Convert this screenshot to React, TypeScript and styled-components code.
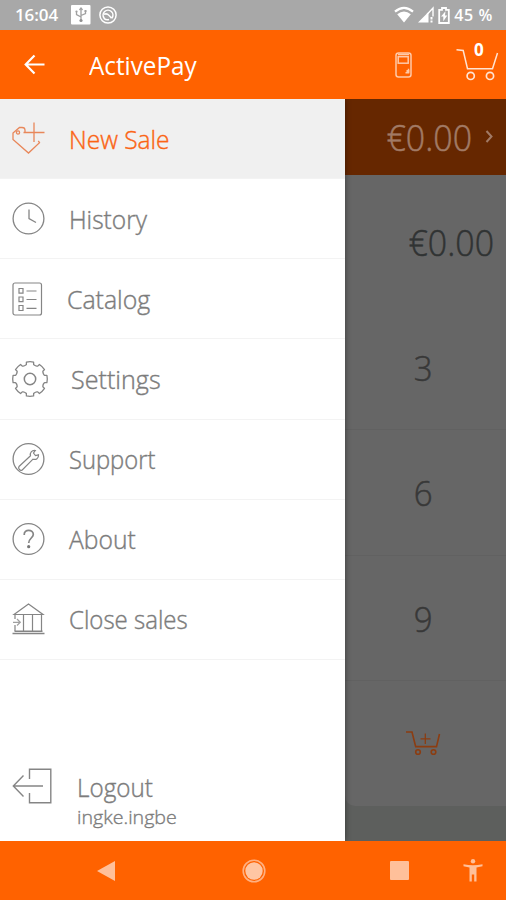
import React from 'react';
import styled, { createGlobalStyle } from 'styled-components';

const Global = createGlobalStyle`
  * { box-sizing: border-box; }
  body { margin: 0; background: #ff6200; font-family: 'Open Sans', 'Noto Sans', sans-serif; }
  svg { display: block; flex: none; fill: none; overflow: visible; }
`;

const Screen = styled.div`
  width: 506px;
  height: 900px;
  display: flex;
  flex-direction: column;
  overflow: hidden;
`;

const StatusBar = styled.header`
  flex: none;
  height: 30px;
  display: flex;
  align-items: center;
  justify-content: space-between;
  padding: 0 13px 0 15px;
  background: #a8a8a8;
  color: #fff;
`;

const StatusText = styled.span<{ $size: number; $spacing: number }>`
  font: 600 ${p => p.$size}px/28px 'Open Sans', sans-serif;
  letter-spacing: ${p => p.$spacing}px;
  white-space: nowrap;
`;

const StatusGroup = styled.div<{ $gap: number }>`
  display: flex;
  align-items: center;
  gap: ${p => p.$gap}px;
`;

const Toolbar = styled.div`
  flex: none;
  height: 69px;
  display: flex;
  align-items: center;
  padding: 0 8px 0 24px;
  background: #ff6200;
  color: #fff;
`;

const Title = styled.h1`
  margin: 0 0 0 44px;
  font-size: 25px;
  line-height: 36px;
  font-weight: 400;
  white-space: nowrap;
  transform: scaleX(0.97);
  transform-origin: left;
`;

const TerminalSlot = styled.div`
  margin: 0 44px 0 auto;
`;

const CartSlot = styled.div`
  position: relative;
`;

const CartCount = styled.span`
  position: absolute;
  left: 18px;
  top: -10px;
  font: 700 17px/24px 'Open Sans', sans-serif;
`;

const Main = styled.main`
  flex: none;
  height: 742px;
  display: flex;
  background: #5d5f5d;
`;

const Drawer = styled.nav`
  position: relative;
  z-index: 1;
  width: 345px;
  height: 742px;
  display: flex;
  flex-direction: column;
  background: #fff;
  box-shadow: 0 0 6px rgba(0, 0, 0, 0.45);
  clip-path: inset(0 -12px 0 0);
`;

const MenuRow = styled.a<{ $active?: boolean; $gap: number }>`
  flex: none;
  height: 80.15px;
  display: flex;
  align-items: center;
  gap: ${p => p.$gap}px;
  padding-left: 12px;
  color: ${p => (p.$active ? '#fb6414' : '#7c7c7c')};
  background: ${p => (p.$active ? '#f0f0f0' : '#fff')};
  border-bottom: 1px solid #f3f3f3;
`;

const Label = styled.span<{ $scale: number }>`
  font-size: 25px;
  line-height: 34px;
  font-weight: 300;
  -webkit-text-stroke: 0.4px currentColor;
  white-space: nowrap;
  transform: scaleX(${p => p.$scale});
  transform-origin: left;
`;

const LogoutRow = styled.a`
  display: flex;
  gap: 25px;
  margin-top: auto;
  padding: 0 0 12px 12px;
  color: #7c7c7c;
`;

const LogoutText = styled.div`
  display: flex;
  flex-direction: column;
  margin-top: 2px;
`;

const UserName = styled.span`
  font-size: 18.5px;
  line-height: 25px;
  font-weight: 300;
  -webkit-text-stroke: 0.35px currentColor;
  transform: scaleX(1.06);
  transform-origin: left;
`;

const Sale = styled.section`
  width: 161px;
  height: 707px;
  display: flex;
  flex-direction: column;
  background: #666;
  border-radius: 0 0 0 10px;
`;

const Amount = styled.span`
  font-size: 36.5px;
  line-height: 50px;
  font-weight: 300;
  -webkit-text-stroke: 0.5px currentColor;
  transform: scaleX(0.93);
  transform-origin: right;
`;

const TotalBar = styled.div`
  flex: none;
  height: 76px;
  display: flex;
  align-items: center;
  justify-content: flex-end;
  gap: 14px;
  padding: 0 13px 0 0;
  background: #662700;
  color: #a17a65;
`;

const Entry = styled.div`
  flex: none;
  height: 130px;
  display: flex;
  align-items: center;
  justify-content: flex-end;
  padding: 3px 12px 0 0;
  color: #303333;
`;

const Key = styled.button`
  flex: none;
  height: 125.3px;
  display: flex;
  align-items: center;
  justify-content: center;
  padding: 0 5px 0 0;
  border: 0;
  border-bottom: 1px solid #616161;
  background: none;
  color: #383838;
  font: 300 35.5px/46px 'Open Sans', sans-serif;
  -webkit-text-stroke: 0.5px currentColor;

  &:last-child { border-bottom: 0; }
`;

const Digit = styled.span`
  transform: scaleX(0.93);
`;

const NavBar = styled.footer`
  flex: 1;
  display: flex;
  align-items: center;
  padding-left: 69px;
  background: #ff6200;
`;

const NavButton = styled.div<{ $before?: number }>`
  flex: none;
  width: 74px;
  display: flex;
  justify-content: center;
  margin-left: ${p => p.$before ?? 0}px;
`;

const UsbIcon = () => (
  <svg width="20" height="20" viewBox="0 0 20 20">
    <rect width="19.5" height="19.5" rx="1" fill="#fff" />
    <g stroke="#a0a0a0" strokeWidth="1.3">
      <path d="M10 3.5V15M10 12 5.5 9.5V6.5M10 10.5l4.5-2V6" />
      <path d="M8.5 5 10 3l1.5 2" />
    </g>
    <circle cx="10" cy="15.5" r="1.6" fill="#909090" />
    <circle cx="5.5" cy="6.5" r="1.1" fill="#a0a0a0" />
    <rect x="13.5" y="5" width="2" height="2" fill="#a0a0a0" />
  </svg>
);

const SyncIcon = () => (
  <svg width="18" height="18" viewBox="0 0 18 18" stroke="#fff">
    <circle cx="9" cy="9" r="8.1" strokeWidth="1.5" />
    <path d="M5.2 12.2A4.9 4.9 0 1 1 12.8 12.2M5 12.3a5.2 5.2 0 0 0 5 1.2M5 8.3c3-1.3 4.5.2 7.6 4" strokeWidth="1.6" />
  </svg>
);

const WifiIcon = () => (
  <svg width="20" height="16" viewBox="0 0 20 16">
    <path d="M1 4.7Q10-3 19 4.7" stroke="#fff" strokeWidth="2.2" />
    <path d="M3.2 7.2Q10 1.8 16.8 7.2L10 15.5z" fill="#fff" />
  </svg>
);

const SignalIcon = () => (
  <svg width="16" height="16" viewBox="0 0 16 16">
    <path d="M0 15.5 10.5 5v10.5z" fill="#fff" />
    <path d="M9 7.5 15 1v8.5" stroke="#fff" strokeWidth="1.4" />
    <path d="M13.5 10v2.5M13.5 13.5v2" stroke="#fff" strokeWidth="2" />
  </svg>
);

const BatteryIcon = () => (
  <svg width="12" height="17" viewBox="0 0 12 17">
    <path d="M4 1h4v1.8h2.8V16H1.2V2.8H4z" stroke="#fff" strokeWidth="1.8" />
    <path d="M7.5 4.2 3 9.6h2.3v4.6L9.3 8.5H7z" fill="#fff" />
  </svg>
);

const BackArrow = () => (
  <svg width="21" height="20" viewBox="0 0 21 20" stroke="#fff" strokeWidth="2.2">
    <path d="M20.5 9.5H2M10.5.5 1.7 9.5l8.8 9" />
  </svg>
);

const TerminalIcon = () => (
  <svg width="17" height="26" viewBox="0 0 17 26" stroke="#ffc9a8" strokeWidth="1.5">
    <rect x="1" y="1" width="15" height="24" rx="2.5" />
    <rect x="3.2" y="4.7" width="10" height="6.5" />
    <path d="M3 2.5h11M10.5 20.8h3v-4" />
    <path d="M11.5 19h1.8v1.8" strokeWidth="2" />
  </svg>
);

const CartIcon = () => (
  <svg width="42" height="33" viewBox="0 0 42 33" stroke="#ffe3d2" strokeWidth="1.5">
    <path d="M.5 1.7 7.2 2.5l4.3 18.2h25L41.5 5" />
    <circle cx="14.7" cy="27.9" r="3.6" strokeWidth="1.7" />
    <circle cx="34" cy="27.9" r="3.6" strokeWidth="1.7" />
  </svg>
);

const AddCartIcon = () => (
  <svg width="34" height="24" viewBox="0 0 34 24" stroke="#8c3d11" strokeWidth="1.6">
    <path d="M0 0h6l3.7 14.6h20.8L33.5 2" />
    <circle cx="12" cy="20" r="2.3" />
    <circle cx="27.5" cy="20" r="2.3" />
    <path d="M19.3 1.5v10.5M14.5 6.8h10" strokeWidth="1.3" />
  </svg>
);

const ChevronIcon = () => (
  <svg width="7" height="12" viewBox="0 0 7 12" stroke="#a17a65" strokeWidth="2">
    <path d="M.5 0 5.5 5.5l-5 5.5" />
  </svg>
);

const NewSaleIcon = () => (
  <svg width="33" height="33" viewBox="0 0 33 33" stroke="#e8875a" strokeWidth="1.3">
    <path d="M22 0.5V20M11.5 10.5H32.5" />
    <path d="M13 10.5V8.3Q13 5.5 10 5.5H7.5L1 11v6.5L16.5 31 27.5 20.6l-1.2-1.8" />
    <circle cx="6" cy="10.5" r="1.6" />
  </svg>
);

const ClockIcon = () => (
  <svg width="33" height="33" viewBox="0 0 33 33" stroke="#858585" strokeWidth="1.3">
    <circle cx="16.5" cy="16.5" r="15.4" />
    <path d="M17 7.5v9l7 4" />
  </svg>
);

const CatalogIcon = () => (
  <svg width="31" height="34" viewBox="0 0 31 34" stroke="#858585" strokeWidth="1.2">
    <rect x="1" y="1" width="28.5" height="32" rx="2" />
    <path d="M7 6.5h4v4.7H7zM7 15h4v4.7H7zM7 23.5h4v5H7zM14.5 9h10M14.5 17.5h10M14.5 26.3h10" />
  </svg>
);

const teeth = Array.from({ length: 8 }, (_, i) => {
  const at = (deg: number, r: number) => {
    const a = ((i * 45 + deg - 90) * Math.PI) / 180;
    return `${(18 + r * Math.cos(a)).toFixed(2)} ${(18 + r * Math.sin(a)).toFixed(2)}`;
  };
  return `${i ? 'L' : 'M'}${at(-17, 14.6)}L${at(-14, 15)}L${at(-12, 17.3)}A17.3 17.3 0 0 1 ${at(12, 17.3)}L${at(14, 15)}L${at(17, 14.6)}A5 5 0 0 0 ${at(28, 14.6)}`;
}).join('');

const GearIcon = () => (
  <svg width="36" height="36" viewBox="0 0 36 36" stroke="#858585" strokeWidth="1.3" strokeLinejoin="round">
    <path d={`${teeth}Z`} />
    <circle cx="18" cy="18" r="5.7" strokeWidth="1.5" />
  </svg>
);

const SupportIcon = () => (
  <svg width="33" height="33" viewBox="0 0 33 33" stroke="#858585" strokeWidth="1.2">
    <circle cx="16.5" cy="16" r="15.4" strokeWidth="1.3" />
    <path d="m7 23.5 11.5-10.7c-.8-3 1.2-5.7 4.8-5.3L21.5 10l2 2.5 3-.7c.3 3.7-2.5 5.3-5.5 4.4L10 27.2c-2 1-4.2-1.7-3-3.7z" />
  </svg>
);

const AboutIcon = () => (
  <svg width="33" height="33" viewBox="0 0 33 33" stroke="#858585" strokeWidth="1.3">
    <circle cx="16.5" cy="16" r="15.4" />
    <path d="M12.2 12C11.8 5.5 21.5 6.2 21.3 11.5c-.1 3.3-4.6 4-4.6 8.5" strokeWidth="1.7" />
    <circle cx="16.7" cy="23.7" r="1.6" fill="#777" stroke="none" />
  </svg>
);

const BankIcon = () => (
  <svg width="33" height="32" viewBox="0 0 33 32" stroke="#858585" strokeWidth="1.2">
    <path d="M2 11.5 16.5 1 31 11.5zM3 12v4M3 22v6M11.5 12v16M20.5 12v16M29.5 12v16" />
    <path d="M2.5 28.2h28M.5 30.5h32" strokeWidth="1.6" />
    <path d="M1 19.3h7M5 16l3.3 3.3L5 22.5" stroke="#a0a0a0" />
  </svg>
);

const LogoutIcon = () => (
  <svg width="40" height="36" viewBox="0 0 40 36" stroke="#858585" strokeWidth="1.4">
    <path d="M17.5 11V1.2h21.3v33.6H17.5V25M31 18H1.5M11.5 7.5 1.3 18l10.2 10.5" />
  </svg>
);

const items = [
  { label: 'New Sale', icon: <NewSaleIcon />, gap: 24, scale: 0.98, active: true },
  { label: 'History', icon: <ClockIcon />, gap: 24, scale: 0.98 },
  { label: 'Catalog', icon: <CatalogIcon />, gap: 24, scale: 0.995 },
  { label: 'Settings', icon: <GearIcon />, gap: 23, scale: 1.005 },
  { label: 'Support', icon: <SupportIcon />, gap: 24, scale: 0.95 },
  { label: 'About', icon: <AboutIcon />, gap: 24, scale: 0.985 },
  { label: 'Close sales', icon: <BankIcon />, gap: 24, scale: 0.96 },
];

export default function App() {
  return (
    <Screen>
      <Global />
      <StatusBar>
        <StatusGroup $gap={13}>
          <StatusText $size={17} $spacing={-0.1}>16:04</StatusText>
          <StatusGroup $gap={8}><UsbIcon /><SyncIcon /></StatusGroup>
        </StatusGroup>
        <StatusGroup $gap={4}>
          <WifiIcon /><SignalIcon /><BatteryIcon />
          <StatusText $size={16} $spacing={0.6}>45 %</StatusText>
        </StatusGroup>
      </StatusBar>
      <Toolbar>
        <BackArrow />
        <Title>ActivePay</Title>
        <TerminalSlot><TerminalIcon /></TerminalSlot>
        <CartSlot><CartIcon /><CartCount>0</CartCount></CartSlot>
      </Toolbar>
      <Main>
        <Drawer>
          {items.map(({ label, icon, gap, scale, active }) => (
            <MenuRow key={label} $active={active} $gap={gap}>
              {icon}
              <Label $scale={scale}>{label}</Label>
            </MenuRow>
          ))}
          <LogoutRow>
            <LogoutIcon />
            <LogoutText>
              <Label $scale={0.97}>Logout</Label>
              <UserName>ingke.ingbe</UserName>
            </LogoutText>
          </LogoutRow>
        </Drawer>
        <Sale>
          <TotalBar><Amount>€0.00</Amount><ChevronIcon /></TotalBar>
          <Entry><Amount>€0.00</Amount></Entry>
          <Key><Digit>3</Digit></Key>
          <Key><Digit>6</Digit></Key>
          <Key><Digit>9</Digit></Key>
          <Key><AddCartIcon /></Key>
        </Sale>
      </Main>
      <NavBar>
        <NavButton>
          <svg width="18" height="20" viewBox="0 0 18 20"><path d="M18 0v20L0 10z" fill="#ffc09a" /></svg>
        </NavButton>
        <NavButton $before={74}>
          <svg width="24" height="24" viewBox="0 0 24 24">
            <circle cx="12" cy="12" r="10.8" stroke="#ffb080" strokeWidth="1.6" />
            <circle cx="12" cy="12" r="8.7" fill="#ffc6a3" />
          </svg>
        </NavButton>
        <NavButton $before={71}>
          <svg width="19" height="19" viewBox="0 0 19 19"><rect width="19" height="19" rx="1" fill="#ffc09a" /></svg>
        </NavButton>
        <NavButton>
          <svg width="20" height="23" viewBox="0 0 20 23">
            <circle cx="10" cy="2.3" r="2.2" fill="#ffc09a" />
            <path d="M.5 5.2Q10 7.5 19.5 5.2v2L13.5 8.5V22.5h-2.3V15.5H8.8v7H6.5V8.5L.5 7.2z" fill="#ffc09a" />
          </svg>
        </NavButton>
      </NavBar>
    </Screen>
  );
}
